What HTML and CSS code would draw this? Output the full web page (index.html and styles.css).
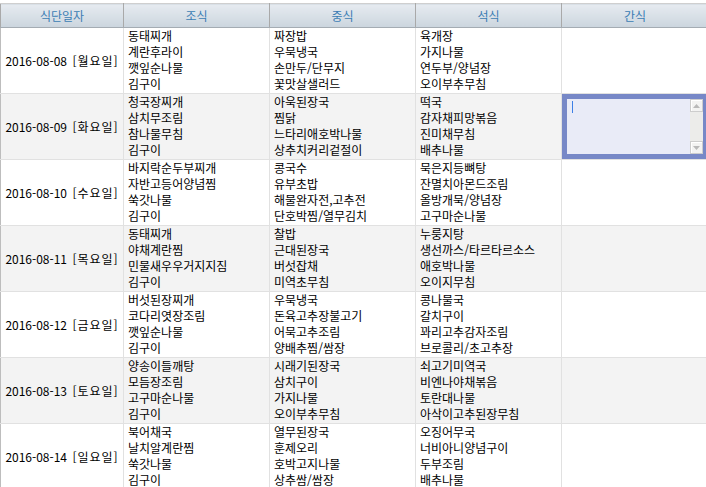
FILE: index.html
```html
<!DOCTYPE html>
<html lang="ko">
<head>
<meta charset="utf-8">
<title>식단표</title>
<link rel="stylesheet" href="styles.css">
</head>
<body>
<table class="menu">
  <colgroup>
    <col class="c-date">
    <col class="c-meal">
    <col class="c-meal">
    <col class="c-meal">
    <col class="c-snack">
  </colgroup>
  <thead>
    <tr><th>식단일자</th><th>조식</th><th>중식</th><th>석식</th><th>간식</th></tr>
  </thead>
  <tbody>
    <tr>
      <td class="date">2016-08-08 <span class="day">[월요일]</span></td>
      <td>동태찌개<br>계란후라이<br>깻잎순나물<br>김구이</td>
      <td>짜장밥<br>우묵냉국<br>손만두/단무지<br>꽃맛살샐러드</td>
      <td>육개장<br>가지나물<br>연두부/양념장<br>오이부추무침</td>
      <td></td>
    </tr>
    <tr class="alt">
      <td class="date">2016-08-09 <span class="day">[화요일]</span></td>
      <td>청국장찌개<br>삼치무조림<br>참나물무침<br>김구이</td>
      <td>아욱된장국<br>찜닭<br>느타리애호박나물<br>상추치커리겉절이</td>
      <td>떡국<br>감자채피망볶음<br>진미채무침<br>배추나물</td>
      <td class="edit">
        <div class="memo">
          <div class="memo-text"><span class="caret"></span></div>
          <div class="memo-scroll">
            <span class="sbtn"><svg width="7" height="4" viewBox="0 0 7 4"><path d="M0 4 L3.5 0 L7 4 Z" fill="#b9b9b9"/></svg></span>
            <span class="sbtn"><svg width="7" height="4" viewBox="0 0 7 4"><path d="M0 0 L3.5 4 L7 0 Z" fill="#b9b9b9"/></svg></span>
          </div>
        </div>
      </td>
    </tr>
    <tr>
      <td class="date">2016-08-10 <span class="day">[수요일]</span></td>
      <td>바지락순두부찌개<br>자반고등어양념찜<br>쑥갓나물<br>김구이</td>
      <td>콩국수<br>유부초밥<br>해물완자전,고추전<br>단호박찜/열무김치</td>
      <td>묵은지등뼈탕<br>잔멸치아몬드조림<br>올방개묵/양념장<br>고구마순나물</td>
      <td></td>
    </tr>
    <tr class="alt">
      <td class="date">2016-08-11 <span class="day">[목요일]</span></td>
      <td>동태찌개<br>야채계란찜<br>민물새우우거지지짐<br>김구이</td>
      <td>찰밥<br>근대된장국<br>버섯잡채<br>미역초무침</td>
      <td>누룽지탕<br>생선까스/타르타르소스<br>애호박나물<br>오이지무침</td>
      <td></td>
    </tr>
    <tr>
      <td class="date">2016-08-12 <span class="day">[금요일]</span></td>
      <td>버섯된장찌개<br>코다리엿장조림<br>깻잎순나물<br>김구이</td>
      <td>우묵냉국<br>돈육고추장불고기<br>어묵고추조림<br>양배추찜/쌈장</td>
      <td>콩나물국<br>갈치구이<br>꽈리고추감자조림<br>브로콜리/초고추장</td>
      <td></td>
    </tr>
    <tr class="alt">
      <td class="date">2016-08-13 <span class="day">[토요일]</span></td>
      <td>양송이들깨탕<br>모듬장조림<br>고구마순나물<br>김구이</td>
      <td>시래기된장국<br>삼치구이<br>가지나물<br>오이부추무침</td>
      <td>쇠고기미역국<br>비엔나야채볶음<br>토란대나물<br>아삭이고추된장무침</td>
      <td></td>
    </tr>
    <tr>
      <td class="date">2016-08-14 <span class="day">[일요일]</span></td>
      <td>북어채국<br>날치알계란찜<br>쑥갓나물<br>김구이</td>
      <td>열무된장국<br>훈제오리<br>호박고지나물<br>상추쌈/쌈장</td>
      <td>오징어무국<br>너비아니양념구이<br>두부조림<br>배추나물</td>
      <td></td>
    </tr>
  </tbody>
</table>
</body>
</html>
```

FILE: styles.css
```css
html, body {
  margin: 0;
  padding: 0;
  background: #ffffff;
  overflow: hidden;
}
body {
  padding-top: 3px;
  font-family: "Noto Sans CJK KR", "Noto Sans", sans-serif;
  font-size: 12px;
  color: #000;
}
.menu {
  border-collapse: collapse;
  table-layout: fixed;
  width: 708px;
}
.c-date { width: 123px; }
.c-meal { width: 146px; }
.c-snack { width: 147px; }

.menu th {
  height: 23px;
  padding: 0;
  font-weight: normal;
  font-size: 12px;
  line-height: 23px;
  color: #3b7db4;
  text-align: center;
  background: linear-gradient(#e6ebf0, #cbd5de);
  border-top: 1px solid #cfcfcf;
  border-bottom: 1px solid #a4acb3;
  border-left: 1px solid #a9a9a9;
  border-right: 1px solid #a9a9a9;
}
.menu td {
  padding: 0 4px 1px 4px;
  line-height: 16px;
  height: 64px;
  vertical-align: top;
  white-space: nowrap;
  overflow: hidden;
  border: 1px solid #e1e1e1;
}
.menu td:first-child {
  border-left: 1px solid #bdbdbd;
}
.menu tr.alt td {
  background: #f3f3f3;
}
.menu td.date {
  text-align: center;
  vertical-align: middle;
  padding: 0;
}
.day {
  letter-spacing: 1px;
  margin-left: 2px;
}
.menu td.edit {
  padding: 0;
  vertical-align: top;
}
.memo {
  box-sizing: border-box;
  height: 65px;
  border: 5px solid #7788c7;
  background: #e9ebf7;
  display: flex;
}
.memo-text {
  flex: 1;
  padding: 2px 5px;
}
.caret {
  display: block;
  width: 1px;
  height: 12px;
  background: #3d7fe6;
}
.memo-scroll {
  width: 13px;
  background: #ececea;
  display: flex;
  flex-direction: column;
  justify-content: space-between;
}
.sbtn {
  box-sizing: border-box;
  width: 13px;
  height: 13px;
  background: #f3f3f2;
  border: 1px solid #cdcdcd;
  box-shadow: inset 1px 1px 0 #ffffff;
  display: flex;
  align-items: center;
  justify-content: center;
}
.sbtn svg {
  display: block;
}
```
